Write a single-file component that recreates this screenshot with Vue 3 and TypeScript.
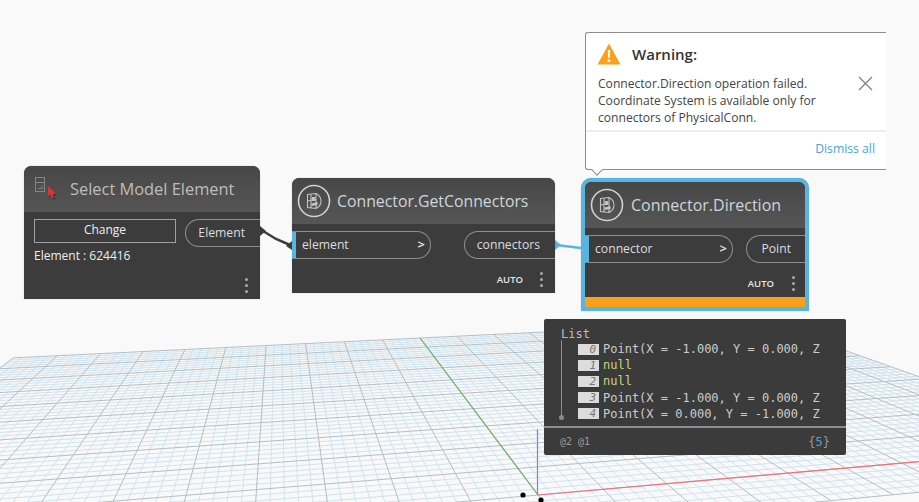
<template>
  <div class="canvas">
    <svg class="floor" width="919" height="502" viewBox="0 0 919 502">
      <path :d="minorPath" class="floor__minor" />
      <path :d="majorPath" class="floor__major" />
      <path :d="redAxis" class="floor__axis" stroke="#f07078" />
      <path :d="greenAxis" class="floor__axis" stroke="#6fae68" />
      <path d="M537.5 429V495" class="floor__axis" stroke="#7f7fee" />
      <circle cx="523" cy="495" r="2.6" fill="#000" />
      <circle cx="541" cy="500" r="2.6" fill="#000" />
    </svg>

    <svg class="wires" width="919" height="502" viewBox="0 0 919 502">
      <path d="M263 231L276 239L290 245" fill="none" stroke="#3c3c3c" stroke-width="2.5" />
      <path d="M260 226l6 5-6 5z" fill="#3c3c3c" />
      <path d="M292 241l-6 5 6 4z" fill="#3c3c3c" />
      <path d="M556 245L585 248.500" fill="none" stroke="#5ab4e0" stroke-width="2.5" />
      <path d="M555 240l6 5-6 5z" fill="#5ab4e0" />
    </svg>

    <section class="node node--select">
      <header class="node__head node__head--select">
        <svg class="pick-icon" width="24" height="24" viewBox="0 0 24 24">
          <rect x="1.500" y="1.500" width="9" height="14" fill="none" stroke="#868686" stroke-width="1" />
          <path d="M1.500 6.500H10.500M8 9.500v3H4" fill="none" stroke="#868686" stroke-width="1" />
          <path d="M15 11l8 8-3 .5 1.500 3.500-2.500.5-2-3.500-2.500 2z" fill="#2e2e2e" opacity="0.7" />
          <path d="M14 10l8 7.500-3.500.7 1.500 3.300-2 .6-1.700-3.300-2.500 2.200z" fill="#d8343b" />
        </svg>
        <span class="node__title node__title--wide">Select Model Element</span>
      </header>
      <div class="node__body node__body--select">
        <div class="select-col">
          <div class="change">Change</div>
          <div class="element-id">Element : 624416</div>
        </div>
        <div class="port port--out port--flush">Element</div>
      </div>
      <footer class="node__foot node__foot--select">
        <span class="dots"><i /><i /><i /></span>
      </footer>
    </section>

    <section class="node node--get">
      <header class="node__head">
        <svg class="node__icon" width="34" height="34" viewBox="0 0 34 34">
          <circle cx="17" cy="17" r="15.500" fill="none" stroke="#d2d2d2" stroke-width="1.600" />
          <path d="M10.500 10.500L19 9.500Q24 12 24 17T19 24.500L10.500 23.500zM14 10.500v13M10.500 17L19 15.500M19 9.500v15" fill="none" stroke="#c4c4c4" stroke-width="1.100" />
          <path d="M15 13h3v4h-3zM14.500 19.500l6-1.500v3l-6 1z" fill="#c4c4c4" />
        </svg>
        <span class="node__title node__title--bright node__title--tight">Connector.GetConnectors</span>
      </header>
      <div class="node__body">
        <div class="port port--in"><span>element</span><b>&gt;</b></div>
        <div class="port port--out port--flush">connectors</div>
      </div>
      <footer class="node__foot">
        <span class="lacing">AUTO</span>
        <span class="dots"><i /><i /><i /></span>
      </footer>
    </section>

    <section class="node node--dir">
      <header class="node__head">
        <svg class="node__icon" width="34" height="34" viewBox="0 0 34 34">
          <circle cx="17" cy="17" r="15.500" fill="none" stroke="#d2d2d2" stroke-width="1.600" />
          <path d="M10.500 10.500L19 9.500Q24 12 24 17T19 24.500L10.500 23.500zM14 10.500v13M10.500 17L19 15.500M19 9.500v15" fill="none" stroke="#c4c4c4" stroke-width="1.100" />
          <path d="M15 13h3v4h-3zM14.500 19.500l6-1.500v3l-6 1z" fill="#c4c4c4" />
        </svg>
        <span class="node__title node__title--bright node__title--shifted">Connector.Direction</span>
      </header>
      <div class="node__body">
        <div class="port port--in port--in-wide"><span>connector</span><b>&gt;</b></div>
        <div class="port port--out port--flush port--point">Point</div>
      </div>
      <footer class="node__foot node__foot--dir">
        <span class="lacing">AUTO</span>
        <span class="dots"><i /><i /><i /></span>
      </footer>
      <div class="node__warn-strip" />
    </section>

    <aside class="warning">
      <div class="warning__head">
        <svg width="24" height="22" viewBox="0 0 24 22">
          <path d="M12 .5L23.500 21.500H.5z" fill="#f9a11b" />
          <path d="M10.800 7h2.400l-.4 8h-1.600zM10.700 16.500h2.600v2.600h-2.600z" fill="#fff" />
        </svg>
        <strong>Warning:</strong>
      </div>
      <div class="warning__body">
        <p>Connector.Direction operation failed.<br />Coordinate System is available only for<br />connectors of PhysicalConn.</p>
        <svg class="warning__close" width="15" height="15" viewBox="0 0 15 15">
          <path d="M1 1l13 13M14 1L1 14" stroke="#7d7d7d" stroke-width="1.200" fill="none" />
        </svg>
      </div>
      <div class="warning__foot">Dismiss all</div>
    </aside>

    <aside class="preview">
      <div class="preview__tree">
        <div class="preview__label">List</div>
        <div v-for="row in rows" :key="row.index" class="preview__row">
          <span class="preview__index">{{ row.index }}</span>
          <span :class="{ 'preview__null': row.text === 'null' }">{{ row.text }}</span>
        </div>
      </div>
      <div class="preview__foot">
        <span>@2 @1</span>
        <span class="preview__count">{<em>5</em>}</span>
      </div>
    </aside>
  </div>
</template>

<script setup lang="ts">
const rows = [
  { index: 0, text: "Point(X = -1.000, Y = 0.000, Z" },
  { index: 1, text: "null" },
  { index: 2, text: "null" },
  { index: 3, text: "Point(X = -1.000, Y = 0.000, Z" },
  { index: 4, text: "Point(X = 0.000, Y = -1.000, Z" },
];

// floor plane: world x runs along the red axis, world y along the green one
const origin = [538, 495];
const vanishX = [4740, 127];
const vanishY = [279, 150];
const alpha = 0.158;
const beta = 0.835;

function project(x: number, y: number) {
  const w = 1 + alpha * x + beta * y;
  const px = (origin[0] + alpha * x * vanishX[0] + beta * y * vanishY[0]) / w;
  const py = (origin[1] + alpha * x * vanishX[1] + beta * y * vanishY[1]) / w;
  return `${px.toFixed(1)} ${py.toFixed(1)}`;
}

function segment(x0: number, y0: number, x1: number, y1: number) {
  return `M${project(x0, y0)}L${project(x1, y1)}`;
}

const nearY = -0.1;
let minorPath = "";
let majorPath = "";
for (let i = -50; i <= 50; i++) {
  const x = i / 50;
  const line = segment(x, nearY, x, 1);
  if (i % 5 === 0) majorPath += line;
  else minorPath += line;
}
for (let i = -5; i <= 50; i++) {
  const y = i / 50;
  const line = segment(-1, y, 1, y);
  if (i % 5 === 0) majorPath += line;
  else minorPath += line;
}
const redAxis = segment(0, 0, 1, 0);
const greenAxis = segment(0, 0, 0, 1);
</script>

<style scoped>
.canvas {
  position: relative;
  width: 919px;
  height: 502px;
  overflow: hidden;
  background: #f9f9f9;
  font-family: "Open Sans", "Noto Sans", sans-serif;
}

.floor,
.wires {
  position: absolute;
  left: 0;
  top: 0;
}

.floor__minor {
  fill: none;
  stroke: #d0e3ee;
  stroke-width: 1;
}

.floor__major {
  fill: none;
  stroke: #b4bec3;
  stroke-width: 1;
}

.floor__axis {
  fill: none;
  stroke-width: 1.2;
}

.node {
  position: absolute;
  display: flex;
  flex-direction: column;
  box-sizing: border-box;
  background: #3c3c3c;
  border-radius: 8px 8px 0 0;
  color: #eee;
  box-shadow: 0 0 1px rgba(0, 0, 0, 0.4);
}

.node--select {
  left: 24px;
  top: 166px;
  width: 236px;
  height: 133px;
}

.node--get {
  left: 292px;
  top: 178px;
  width: 263px;
  height: 115px;
}

.node--dir {
  left: 581px;
  top: 178px;
  width: 228px;
  height: 133px;
  border: 4px solid #5ab4e0;
  border-radius: 10px 10px 0 0;
}

.node__head {
  display: flex;
  align-items: center;
  gap: 6px;
  flex: none;
  height: 46px;
  padding-left: 5px;
  background: linear-gradient(#474747, #565656);
  border-radius: 7px 7px 0 0;
}

.node__head--select {
  gap: 0;
  padding-left: 10px;
}

.pick-icon {
  flex: none;
  align-self: flex-start;
  margin: 10px 12px 0 0;
}

.node__title {
  font-size: 16px;
  color: #b9b9b9;
  white-space: nowrap;
}

.node__title--wide {
  margin-top: -2px;
  font-size: 16.400px;
  color: #bdbdbd;
}

.node__title--tight {
  font-size: 15.800px;
}

.node__title--shifted {
  margin-left: 1px;
}

.node__title--bright {
  color: #cfd6d9;
}

.node__body {
  display: flex;
  justify-content: space-between;
  align-items: flex-start;
  flex: none;
  height: 35px;
  padding-top: 7px;
  font-size: 12.200px;
}

.node__body--select {
  height: 56px;
  padding: 7px 0 0 10px;
}

.select-col {
  width: 142px;
  margin-right: 9px;
  flex: none;
}

.change {
  height: 24px;
  line-height: 19px;
  box-sizing: border-box;
  border: 1px solid #a0a0a0;
  text-align: center;
  font-size: 12px;
  font-weight: 500;
}

.element-id {
  margin-top: 4px;
  font-size: 12px;
}

.port {
  display: flex;
  align-items: center;
  box-sizing: border-box;
  height: 28px;
  padding-bottom: 2px;
  border: 1px solid #8e8e8e;
  font-size: 12.200px;
  color: #ddd;
}

.port--out {
  padding-left: 12px;
  padding-right: 15px;
  border-right: 0;
  border-radius: 14px 0 0 14px;
}

.port--point {
  padding-left: 14px;
  padding-right: 14px;
}

.port--flush {
  margin-left: auto;
}

.port--in {
  justify-content: space-between;
  width: 139px;
  padding-left: 6px;
  padding-right: 5px;
  border-left: 4px solid #5ab4e0;
  border-radius: 0 14px 14px 0;
}

.port--in-wide {
  width: 148px;
}

.port b {
  font-weight: 700;
  font-size: 13px;
}

.node__foot {
  display: flex;
  justify-content: flex-end;
  align-items: center;
  gap: 17px;
  flex: 1;
  padding-right: 12px;
}

.node__foot--select {
  align-items: flex-end;
  padding: 0 12px 6px 0;
}

.node__foot--dir {
  gap: 18px;
  padding-right: 10px;
}

.lacing {
  margin-top: -1px;
  font-size: 9.500px;
  font-weight: 600;
  color: #e6e6e6;
}

.dots {
  display: flex;
  flex-direction: column;
  gap: 3px;
}

.dots i {
  width: 3px;
  height: 3px;
  border-radius: 50%;
  background: #aaa;
}

.node__warn-strip {
  flex: none;
  height: 10px;
  background: #f9a01b;
}

.warning {
  position: absolute;
  left: 585px;
  top: 32px;
  width: 301px;
  height: 138px;
  box-sizing: border-box;
  background: #fff;
  border: 1px solid #8d8d8d;
  border-right: 0;
  border-radius: 3px 0 0 3px;
  color: #444;
}

.warning::after {
  content: "";
  position: absolute;
  left: 7px;
  bottom: -5px;
  width: 7px;
  height: 7px;
  background: #fff;
  border-right: 1px solid #8d8d8d;
  border-bottom: 1px solid #8d8d8d;
  transform: rotate(45deg);
}

.warning__head {
  display: flex;
  align-items: center;
  gap: 11px;
  height: 39px;
  padding: 2px 0 0 11px;
  box-sizing: border-box;
}

.warning__head strong {
  font-size: 15px;
  font-weight: 600;
  color: #333;
}

.warning__body {
  position: relative;
  height: 55px;
  padding: 3px 0 0 12px;
  border-bottom: 2px solid #eee;
  box-sizing: content-box;
}

.warning__body p {
  margin: 0;
  font-size: 12.100px;
  line-height: 17px;
}

.warning__close {
  position: absolute;
  right: 13px;
  top: 4px;
}

.warning__foot {
  padding: 8px 11px 0 0;
  text-align: right;
  font-size: 12.200px;
  color: #4ba3d8;
}

.preview {
  position: absolute;
  left: 544px;
  top: 319px;
  display: flex;
  flex-direction: column;
  width: 302px;
  height: 136px;
  box-sizing: border-box;
  background: #3b3b3b;
  border-radius: 2px;
  color: #ccc;
}

.preview__tree {
  position: relative;
  height: 109px;
  box-sizing: border-box;
  padding: 8px 0 0 17px;
  border-bottom: 2px solid #8c8c8c;
  font-family: "DejaVu Sans Mono", monospace;
  font-size: 12px;
  line-height: 16.200px;
}

.preview__tree::before {
  content: "";
  position: absolute;
  left: 17px;
  top: 21px;
  width: 1px;
  height: 78px;
  background: #8c8c8c;
}

.preview__tree::after {
  content: "";
  position: absolute;
  left: 15px;
  top: 96px;
  width: 5px;
  height: 5px;
  border-radius: 50%;
  background: #8c8c8c;
}

.preview__label {
  height: 14px;
  line-height: 14px;
  color: #bbb;
}

.preview__row {
  display: flex;
  align-items: center;
  gap: 4px;
  padding-left: 17px;
  white-space: nowrap;
}

.preview__index {
  width: 21px;
  height: 11px;
  padding-right: 3px;
  box-sizing: border-box;
  background: #dcdcdc;
  color: #777;
  font-style: italic;
  font-size: 11px;
  line-height: 11px;
  text-align: right;
}

.preview__null {
  color: #c9d57f;
}

.preview__foot {
  display: flex;
  justify-content: space-between;
  align-items: center;
  flex: 1;
  padding: 0 16px;
  font-family: "DejaVu Sans Mono", monospace;
  font-size: 10px;
  color: #999;
}

.preview__count {
  font-size: 12px;
}

.preview__count em {
  font-style: normal;
  color: #4ba3d8;
}
</style>
